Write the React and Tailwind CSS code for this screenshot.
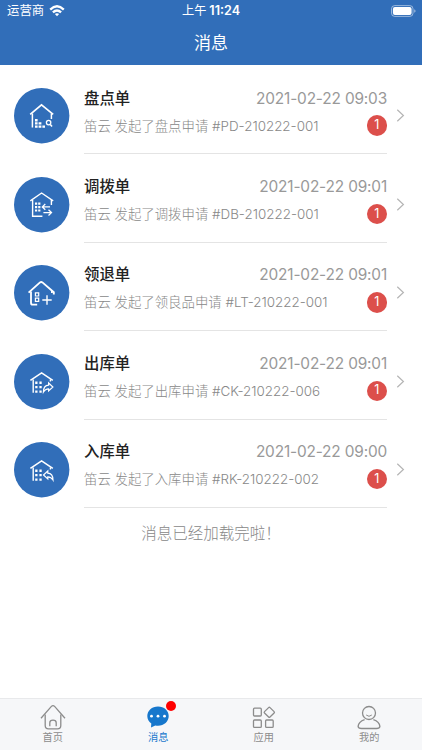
import React, { useState } from 'react';

const CheckIcon = () => (
  <>
    <path d="M16.2 26.4 27.5 16.8 39.2 26.4" strokeWidth="1.7" />
    <path d="M18.4 25.5V39.5M37.4 25.5V31" strokeWidth="1.5" />
    <path
      d="M21 31h2.6v2.4H21zM21 34.2h2.6v2.4H21zM24.6 34.2h2.8v2.4h-2.8zM21 37.4h2.6v2.3H21zM24.6 37.4h2.8v2.3h-2.8zM28.4 37.4H31v2.3h-2.6z"
      fill="#fff"
      stroke="none"
    />
    <circle cx="34.6" cy="34.6" r="2.2" strokeWidth="1.3" />
    <path d="M36.3 36.5 38 38.5" strokeWidth="1.6" />
  </>
);

const TransferIcon = () => (
  <>
    <path d="M16.3 23.8 27.6 16 39.2 23.8" strokeWidth="1.4" />
    <path d="M18.6 23V39.2H28.4M37.4 23V28" strokeWidth="1.4" />
    <path
      d="M21 25.5h2.2v2.2H21zM24.2 25.5h2.2v2.2h-2.2zM21 29h2.2v2.2H21zM24.2 29h2.2v2.2h-2.2zM21 32.4h2.2v2.2H21zM24.2 32.4h2.2v2.2h-2.2z"
      fill="#fff"
      stroke="none"
    />
    <path d="M36 29.9H28.4M31.3 27 28.3 29.9 31.3 32.8M29.4 35.6H37.4M34.5 32.7 37.5 35.6 34.5 38.5" strokeWidth="1.3" />
  </>
);

const ReturnIcon = () => (
  <>
    <path d="M14.6 27.6 26 17.4Q27.2 16.5 28.4 17.4L39.8 27.2V29.4" strokeWidth="1.9" />
    <path d="M17 26.5V38Q17 39.7 18.7 39.7H23.2M37.9 26V28" strokeWidth="1.8" />
    <path d="M21.4 27.8h3.3v3.2h-3.3zM21.4 33.2h3.3v3.2h-3.3z" strokeWidth="1.2" />
    <path d="M33 30.3V39.7M28.3 35H37.7" strokeWidth="1.4" />
  </>
);

const Warehouse = () => (
  <>
    <path d="M16.4 26.4 27.6 18.9 38.8 26.4" strokeWidth="1.6" />
    <path d="M19.2 25.5V38.7M36.4 25.5V27.5" strokeWidth="1.4" />
    <path
      d="M21.2 27.6h2.3v2.3h-2.3zM25.4 27.6h2.3v2.3h-2.3zM21.2 32h2.3v2.3h-2.3zM25.4 32h2.3v2.3h-2.3zM21.2 36.5h2.3v2.3h-2.3zM25.4 36.5h2.3v2.3h-2.3z"
      fill="#fff"
      stroke="none"
    />
  </>
);

const OutboundIcon = () => (
  <>
    <Warehouse />
    <path d="M34.6 29 38.9 33 34.6 36.9V34.8Q31.2 34.8 29.4 38Q29.4 31.4 34.6 31.1Z" strokeWidth="1.2" />
  </>
);

const InboundIcon = () => (
  <>
    <Warehouse />
    <path d="M33.8 29 29.5 33 33.8 36.9V34.8Q37.2 34.8 39 38Q39 31.4 33.8 31.1Z" strokeWidth="1.2" />
  </>
);

const messages = [
  { title: '盘点单', time: '2021-02-22 09:03', text: '笛云 发起了盘点申请 #PD-210222-001', count: 1, Icon: CheckIcon },
  { title: '调拨单', time: '2021-02-22 09:01', text: '笛云 发起了调拨申请 #DB-210222-001', count: 1, Icon: TransferIcon },
  { title: '领退单', time: '2021-02-22 09:01', text: '笛云 发起了领良品申请 #LT-210222-001', count: 1, Icon: ReturnIcon },
  { title: '出库单', time: '2021-02-22 09:01', text: '笛云 发起了出库申请 #CK-210222-006', count: 1, Icon: OutboundIcon },
  { title: '入库单', time: '2021-02-22 09:00', text: '笛云 发起了入库申请 #RK-210222-002', count: 1, Icon: InboundIcon },
];

const HomeIcon = () => (
  <>
    <path d="M1 14.2 11.4 2.4Q13 .9 14.6 2.4L25 14.2" />
    <path d="M5.2 10.5V21.5Q5.2 24.8 8.5 24.8H17.5Q20.8 24.8 20.8 21.5V10.5" />
    <path d="M9.8 22.2V18.8Q9.8 16.2 13 16.2T16.2 18.8V22.2" />
  </>
);

const ChatIcon = () => (
  <>
    <path
      d="M13 2.4C6.9 2.4 2.3 6.6 2.3 12C2.3 15 3.8 17.8 6.3 19.5L6 23.4L10.3 21.4C11.2 21.6 12 21.7 13 21.7C19.1 21.7 23.7 17.5 23.7 12S19.1 2.4 13 2.4Z"
      fill="#1677cc"
      stroke="none"
    />
    <g fill="#fff" stroke="none">
      <circle cx="6.5" cy="12.2" r="1.4" />
      <circle cx="13" cy="12.2" r="1.4" />
      <circle cx="19.5" cy="12.2" r="1.4" />
    </g>
  </>
);

const AppsIcon = () => (
  <>
    <rect x="2.5" y="4.2" width="7.8" height="7.8" rx="1" />
    <rect x="2.5" y="16" width="7.8" height="7.4" rx="1" />
    <rect x="14.6" y="16" width="7.6" height="7.4" rx="1" />
    <path d="M17.6 3.6Q18.3 2.9 19 3.6L23.1 7.6Q23.8 8.3 23.1 9L19 13Q18.3 13.7 17.6 13L13.5 9Q12.8 8.3 13.5 7.6Z" />
  </>
);

const UserIcon = () => (
  <>
    <circle cx="13" cy="9" r="6.5" />
    <path d="M10.2 11Q13 13.6 15.8 11" strokeWidth="1" />
    <path d="M8.6 15.6Q2.6 17.6 2.1 22.4Q2.4 24.5 5.5 24.5H20.5Q23.6 24.5 23.9 22.4Q23.4 17.6 17.4 15.6" />
  </>
);

const tabs = [
  { key: 'home', label: '首页', Icon: HomeIcon },
  { key: 'message', label: '消息', Icon: ChatIcon, dot: true },
  { key: 'apps', label: '应用', Icon: AppsIcon },
  { key: 'mine', label: '我的', Icon: UserIcon },
];

const StatusBar = () => (
  <div className="grid h-[22px] grid-cols-3 items-center px-[7px] text-[12.6px] leading-none">
    <div className="flex items-center gap-[5px]">
      <span className="text-[12.4px]">运营商</span>
      <svg width="16" height="12" viewBox="0 0 16 12" fill="none" stroke="#fff" strokeWidth="2.3">
        <path d="M1.2 4.6Q8-2 14.8 4.6" />
        <path d="M3.9 7.4Q8 3.5 12.1 7.4" />
        <path d="M5.9 9.1Q8 7.3 10.1 9.1L8 11.3Z" fill="#fff" stroke="none" />
      </svg>
    </div>
    <div className="flex justify-center gap-[3px]">
      <span className="text-[12.2px]">上午</span>
      <span className="font-semibold">11:24</span>
    </div>
    <svg className="-mr-px justify-self-end" width="25" height="12" viewBox="0 0 25 12" fill="none">
      <rect x=".5" y=".6" width="21.5" height="10.8" rx="3.2" stroke="#fff" strokeOpacity=".5" />
      <rect x="1.9" y="2" width="18.7" height="8" rx="2" fill="#fff" />
      <path d="M23.2 4.2Q24.6 4.8 24.6 6T23.2 7.8Z" fill="#fff" fillOpacity=".5" />
    </svg>
  </div>
);

const MessageItem = ({ title, time, text, count, Icon }) => (
  <li className="flex h-[88.4px] pl-[14px]">
    <svg className="mt-[22.3px] shrink-0" width="56" height="56" viewBox="0 0 56 56" fill="none" stroke="#fff">
      <circle cx="27.7" cy="27.7" r="27.7" fill="#316eb9" stroke="none" />
      <Icon />
    </svg>
    <div className="ml-[14px] w-[303px] border-b border-[#e4e4e4] pt-[21px]">
      <div className="flex h-[22px] items-center justify-between">
        <h2 className="text-[15.4px] font-medium text-[#222]">{title}</h2>
        <time className="text-[15.4px] tracking-[-0.16px] text-[#999]">{time}</time>
      </div>
      <div className="mt-[6px] flex h-[21px] items-center justify-between whitespace-nowrap">
        <p className="text-[13.4px] font-light text-[#888]">{text}</p>
        <span className="flex size-[20.5px] items-center justify-center rounded-full bg-[#dc4f4b] text-[12.5px] text-white">
          {count}
        </span>
      </div>
    </div>
    <svg className="mt-[43.3px] ml-[9px] shrink-0" width="9" height="13" viewBox="0 0 9 13" fill="none" stroke="#b5b5b5" strokeWidth="1.2">
      <path d="M1.3.8 7.4 6.5 1.3 12.2" />
    </svg>
  </li>
);

const App = () => {
  const [activeTab, setActiveTab] = useState('message');

  return (
    <div className="flex h-screen flex-col overflow-hidden bg-white font-['Inter','Noto_Sans_CJK_SC',sans-serif]">
      <header className="h-[65.4px] shrink-0 bg-[#316eb9] text-white">
        <StatusBar />
        <h1 className="flex h-[44px] items-center justify-center text-[17px]">消息</h1>
      </header>

      <main className="min-h-0 flex-1 pt-[0.7px]">
        <ul>
          {messages.map((item) => (
            <MessageItem key={item.title} {...item} />
          ))}
        </ul>
        <p className="pt-[14px] text-center text-[15.5px] leading-6 font-light text-[#888]">消息已经加载完啦！</p>
      </main>

      <nav className="grid h-[52px] shrink-0 grid-cols-4 border-t border-[#e8e9eb] bg-[#f6f7f9]">
        {tabs.map(({ key, label, Icon, dot }) => (
          <button
            key={key}
            onClick={() => setActiveTab(key)}
            className={`flex flex-col items-center pt-[5px] text-[10.2px] leading-[14px] ${
              activeTab === key ? 'text-[#1677cc]' : 'text-[#8c8c8c]'
            }`}
          >
            <span className="relative">
              <svg width="26" height="26" viewBox="0 0 26 26" fill="none" stroke="#8c8c8c" strokeWidth="1.3">
                <Icon />
              </svg>
              {dot && <span className="absolute -top-[3px] -right-[4.5px] size-[9.5px] rounded-full bg-[#f00]" />}
            </span>
            {label}
          </button>
        ))}
      </nav>
    </div>
  );
};

export default App;
